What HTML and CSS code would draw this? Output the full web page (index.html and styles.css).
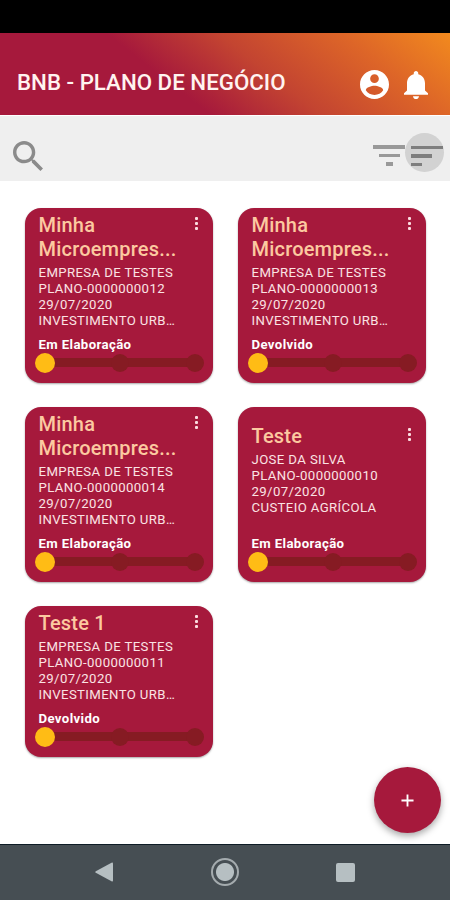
FILE: index.html
```
<!DOCTYPE html>
<html lang="pt-BR">
<head>
  <meta charset="UTF-8" />
  <meta name="viewport" content="width=device-width, initial-scale=1.0"/>
  <title>BNB - Plano de Negócio</title>
  <link rel="stylesheet" href="styles.css">
</head>
<body>
  <div class="app">
    <div class="status-bar"></div>

    <header class="header">
      <h1>BNB - PLANO DE NEGÓCIO</h1>
      <svg class="icon-user" viewBox="2 2 20 20"><path fill="#fff" d="M12 2C6.48 2 2 6.48 2 12s4.48 10 10 10 10-4.48 10-10S17.52 2 12 2zm0 3c1.66 0 3 1.34 3 3s-1.34 3-3 3-3-1.34-3-3 1.34-3 3-3zm0 14.2c-2.5 0-4.71-1.28-6-3.22.03-1.99 4-3.08 6-3.08 1.99 0 5.97 1.09 6 3.08-1.29 1.94-3.5 3.22-6 3.22z"/></svg>
      <svg class="icon-bell" viewBox="4 2.5 16 19.5" preserveAspectRatio="none"><path fill="#fff" d="M12 22c1.1 0 2-.9 2-2h-4c0 1.1.89 2 2 2zm6-6v-5c0-3.07-1.64-5.64-4.5-6.32V4c0-.83-.67-1.5-1.5-1.5s-1.5.67-1.5 1.5v.68C7.63 5.36 6 7.92 6 11v5l-2 2v1h16v-1l-2-2z"/></svg>
    </header>

    <div class="toolbar">
      <svg class="icon-search" viewBox="3 3 17.5 17.5"><path fill="#8b8b8b" d="M15.5 14h-.79l-.28-.27C15.41 12.59 16 11.11 16 9.5 16 5.91 13.09 3 9.5 3S3 5.91 3 9.5 5.91 16 9.5 16c1.61 0 3.09-.59 4.23-1.57l.27.28v.79l5 4.99L20.49 19l-4.99-5zm-6 0C7.01 14 5 11.99 5 9.5S7.01 5 9.5 5 14 7.01 14 9.5 11.99 14 9.5 14z"/></svg>
      <div class="lines filter"><i></i><i></i><i></i></div>
      <div class="sort"><div class="lines"><i></i><i></i><i></i></div></div>
    </div>

    <main class="cards">
      <div class="card">
        <div class="info">
          <div class="title"><h2>Minha<br>Microempres...</h2><span class="menu"><i></i><i></i><i></i></span></div>
          <p>EMPRESA DE TESTES</p>
          <p>PLANO-0000000012</p>
          <p>29/07/2020</p>
          <p>INVESTIMENTO URB…</p>
        </div>
        <div class="state">Em Elaboração</div>
        <div class="progress"><i class="on"></i><i></i><i></i></div>
      </div>

      <div class="card">
        <div class="info">
          <div class="title"><h2>Minha<br>Microempres...</h2><span class="menu"><i></i><i></i><i></i></span></div>
          <p>EMPRESA DE TESTES</p>
          <p>PLANO-0000000013</p>
          <p>29/07/2020</p>
          <p>INVESTIMENTO URB…</p>
        </div>
        <div class="state">Devolvido</div>
        <div class="progress"><i class="on"></i><i></i><i></i></div>
      </div>

      <div class="card">
        <div class="info">
          <div class="title"><h2>Minha<br>Microempres...</h2><span class="menu"><i></i><i></i><i></i></span></div>
          <p>EMPRESA DE TESTES</p>
          <p>PLANO-0000000014</p>
          <p>29/07/2020</p>
          <p>INVESTIMENTO URB…</p>
        </div>
        <div class="state">Em Elaboração</div>
        <div class="progress"><i class="on"></i><i></i><i></i></div>
      </div>

      <div class="card">
        <div class="info">
          <div class="title"><h2>Teste</h2><span class="menu"><i></i><i></i><i></i></span></div>
          <p>JOSE DA SILVA</p>
          <p>PLANO-0000000010</p>
          <p>29/07/2020</p>
          <p>CUSTEIO AGRÍCOLA</p>
        </div>
        <div class="state">Em Elaboração</div>
        <div class="progress"><i class="on"></i><i></i><i></i></div>
      </div>

      <div class="card">
        <div class="info">
          <div class="title"><h2>Teste 1</h2><span class="menu"><i></i><i></i><i></i></span></div>
          <p>EMPRESA DE TESTES</p>
          <p>PLANO-0000000011</p>
          <p>29/07/2020</p>
          <p>INVESTIMENTO URB…</p>
        </div>
        <div class="state">Devolvido</div>
        <div class="progress"><i class="on"></i><i></i><i></i></div>
      </div>
    </main>

    <div class="fab">
      <svg viewBox="0 0 14 14"><path d="M7 .5v13M.5 7h13" stroke="#fff" stroke-width="2"/></svg>
    </div>

    <nav class="nav-bar">
      <svg class="back" viewBox="0 0 18 20"><path fill="#b6bfc2" d="M16.5.7Q18 0 18 1.500V18.500Q18 20 16.500 19.300L.8 10.800Q-.3 10 .8 9.200z"/></svg>
      <span class="home"></span>
      <span class="recent"></span>
    </nav>
  </div>
</body>
</html>
```
FILE: styles.css
```
* {
  box-sizing: border-box;
  margin: 0;
  padding: 0;
  font-family: Roboto, 'Liberation Sans', sans-serif;
}

body {
  background-color: #fff;
}

.app {
  position: relative;
  display: flex;
  flex-direction: column;
  width: 450px;
  height: 900px;
  overflow: hidden;
}

.status-bar {
  height: 33px;
  background: #000;
}

.header {
  display: flex;
  align-items: center;
  height: 82px;
  padding: 18px 22px 0 17px;
  background: linear-gradient(38deg, #a6193c 0%, #a6193c 38%, #c34431 58%, #dd6528 80%, #f28a1e 100%);
}

.header h1 {
  flex-grow: 1;
  margin-top: -2px;
  font-size: 22.3px;
  font-weight: 500;
  white-space: nowrap;
  color: #fff3f0;
}

.icon-user {
  width: 29px;
  height: 29px;
  margin: 3px 15px 0 0;
}

.icon-bell {
  width: 24px;
  height: 28px;
  margin-top: 3px;
}

.toolbar {
  display: flex;
  align-items: center;
  height: 65px;
  margin-top: 1px;
  padding: 0 6px 0 12.5px;
  background: #efefef;
}

.icon-search {
  width: 30px;
  height: 30px;
  margin: 14px auto 0 0;
}

.lines {
  display: flex;
  flex-direction: column;
  gap: 5px;
  width: 32px;
}

.lines i {
  width: 100%;
  height: 3.5px;
  background: #7e7e7e;
}

.lines i:nth-child(2) {
  width: 21px;
}

.lines i:nth-child(3) {
  width: 11px;
}

.filter {
  align-items: center;
  margin-top: 14px;
}

.filter i {
  background: #999;
}

.filter i:nth-child(3) {
  width: 7px;
}

.sort {
  width: 39px;
  height: 39px;
  padding: 13px 0 0 6px;
  margin-top: 7px;
  border-radius: 50%;
  background: #d2d2d2;
}

.cards {
  display: grid;
  grid-template-columns: 188px 188px;
  gap: 23.5px 25px;
  align-content: start;
  flex-grow: 1;
  padding: 26.5px 25px 0;
}

.card {
  display: flex;
  flex-direction: column;
  padding: 5.5px 9px 10.5px 13.5px;
  border-radius: 16px;
  background: #a6193c;
  box-shadow: 0 1px 2px rgba(0,0,0,0.35);
}

.info {
  display: flex;
  flex-direction: column;
  justify-content: center;
  flex-grow: 1;
}

.title {
  display: flex;
  justify-content: space-between;
  margin-bottom: 3.5px;
}

.title h2 {
  font-size: 20px;
  font-weight: 500;
  line-height: 24px;
  letter-spacing: 0.2px;
  white-space: nowrap;
  color: #fcc9a0;
}

.menu {
  display: flex;
  flex-direction: column;
  gap: 2px;
  padding: 4px 6px 0 0;
}

.menu i {
  width: 3px;
  height: 3px;
  border-radius: 1px;
  background: #fbdde0;
}

.info p {
  font-size: 13.2px;
  line-height: 16px;
  letter-spacing: 0.38px;
  white-space: nowrap;
  color: #fbe3e4;
}

.state {
  margin-top: 8px;
  font-size: 13.2px;
  font-weight: 700;
  line-height: 16px;
  letter-spacing: 0.38px;
  color: #fff;
}

.progress {
  display: flex;
  justify-content: space-between;
  align-items: center;
  height: 20px;
  margin-left: -4px;
  background: linear-gradient(#861b23, #861b23) center / 160px 9px no-repeat;
}

.progress i {
  width: 18px;
  height: 18px;
  border-radius: 50%;
  background: #861b23;
}

.progress .on {
  width: 20px;
  height: 20px;
  background: #ffbc15;
}

/* floats over the cards */
.fab {
  position: absolute;
  right: 9px;
  bottom: 67px;
  display: flex;
  align-items: center;
  justify-content: center;
  width: 67px;
  height: 66px;
  border-radius: 50%;
  background: #a6193c;
  box-shadow: 0 3px 7px rgba(0,0,0,0.35);
}

.fab svg {
  width: 13px;
  height: 13px;
}

.nav-bar {
  display: flex;
  align-items: center;
  justify-content: space-between;
  height: 56px;
  padding: 0 95px 1px 95px;
  border-top: 1px solid #0e1c26;
  background: #464e53;
}

.back {
  width: 18px;
  height: 20px;
}

.home {
  width: 28px;
  height: 28px;
  border: 2px solid #a4abae;
  border-radius: 50%;
  background: radial-gradient(circle, #b6bfc2 8.5px, transparent 9.5px);
}

.recent {
  width: 19px;
  height: 19px;
  border-radius: 2px;
  background: #b6bfc2;
}
```
